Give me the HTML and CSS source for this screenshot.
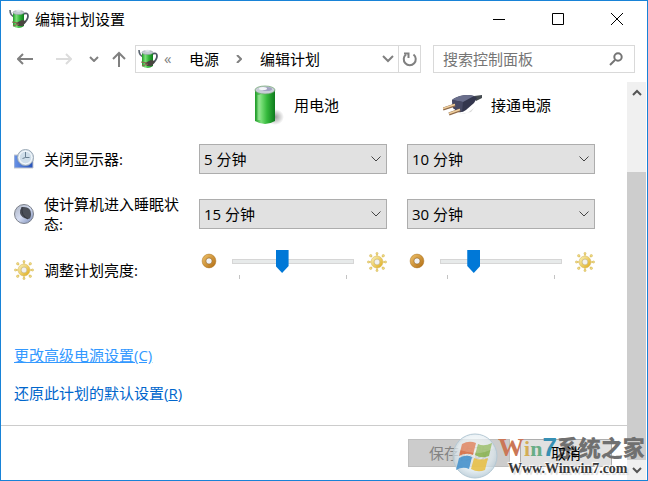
FILE: index.html
```html
<!DOCTYPE html>
<html lang="zh-CN">
  <head>
    <meta charset="UTF-8" />
    <meta name="viewport" content="width=device-width, initial-scale=1.0" />
    <title>编辑计划设置</title>
    <link rel="stylesheet" href="styles.css">
  </head>
  <body>
    <svg class="defs" width="0" height="0" aria-hidden="true">
      <defs>
        <linearGradient id="green" x1="0" x2="1">
          <stop offset="0" stop-color="#1f9a28" />
          <stop offset="0.3" stop-color="#7be07a" />
          <stop offset="0.6" stop-color="#35b93c" />
          <stop offset="1" stop-color="#0d7a1c" />
        </linearGradient>
        <linearGradient id="gold" x1="0" y1="0" x2="1" y2="1">
          <stop offset="0" stop-color="#e8b860" />
          <stop offset="1" stop-color="#b8761c" />
        </linearGradient>
        <linearGradient id="yellow" x1="0" y1="0" x2="1" y2="1">
          <stop offset="0" stop-color="#f7eba8" />
          <stop offset="1" stop-color="#e2b32a" />
        </linearGradient>
        <linearGradient id="blue" x1="0" x2="1">
          <stop offset="0" stop-color="#6a94e8" />
          <stop offset="1" stop-color="#2450b8" />
        </linearGradient>
        <linearGradient id="steel" x1="0" y1="0" x2="1" y2="1">
          <stop offset="0" stop-color="#a9b0bf" />
          <stop offset="0.5" stop-color="#d5ddf2" />
          <stop offset="1" stop-color="#7486b4" />
        </linearGradient>
        <radialGradient id="shadow">
          <stop offset="0" stop-color="#000" stop-opacity="0.4" />
          <stop offset="1" stop-color="#000" stop-opacity="0" />
        </radialGradient>
        <radialGradient id="glass" cx="0.5" cy="0.4" r="0.6">
          <stop offset="0" stop-color="#fff" stop-opacity="0.6" />
          <stop offset="0.7" stop-color="#dce8ee" stop-opacity="0.7" />
          <stop offset="1" stop-color="#b4c8d4" stop-opacity="0.8" />
        </radialGradient>
      </defs>
      <symbol id="power" viewBox="0 0 20 20">
        <path d="M1 1q0 6 5 7" fill="none" stroke="#5b6570" stroke-width="1.6" />
        <path d="M14 5q5-2 5 2t-5 8" fill="none" stroke="#4d5763" stroke-width="1.8" />
        <path d="M4 4v13q5.500 4 11 0V4z" fill="url(#green)" />
        <ellipse cx="9.500" cy="3.500" rx="5.500" ry="2" fill="#c3ccd2" stroke="#8d999f" stroke-width="0.6" />
        <ellipse cx="9.500" cy="1.800" rx="2.500" ry="1" fill="#dfe5ea" />
        <path d="M7 14l6-3 4 1-3 5-5 0z" fill="#4a4540" />
        <path d="M3 13l6 1M4 17l6-2" stroke="#8c6a4e" stroke-width="1.2" />
      </symbol>
      <symbol id="sun" viewBox="0 0 20 20">
        <path d="M10 2v2M10 16v2M2 10h2M16 10h2M4 4l1 1M15 15l1 1M4 16l1-1M15 5l1-1" stroke="#ecd273" stroke-width="1.4" />
        <g fill="#f0dc80" stroke="#cfae52" stroke-width="0.5">
          <circle cx="10" cy="1.500" r="1.100" /><circle cx="10" cy="18.500" r="1.100" />
          <circle cx="1.500" cy="10" r="1.100" /><circle cx="18.500" cy="10" r="1.100" />
          <circle cx="3.700" cy="3.700" r="1.200" /><circle cx="16.300" cy="3.700" r="1.200" />
          <circle cx="3.700" cy="16.300" r="1.200" /><circle cx="16.300" cy="16.300" r="1.200" />
        </g>
        <circle cx="10" cy="10" r="4.400" fill="#f1f1ef" stroke="url(#yellow)" stroke-width="3" />
        <circle cx="10" cy="10" r="6" fill="none" stroke="#cfab4c" stroke-width="0.5" />
        <circle cx="10" cy="10" r="2.900" fill="none" stroke="#b9a368" stroke-width="0.5" />
      </symbol>
      <symbol id="dim" viewBox="0 0 16 16">
        <circle cx="8" cy="8" r="5" fill="#f1f2f5" stroke="url(#gold)" stroke-width="3.800" />
        <circle cx="8" cy="8" r="6.900" fill="none" stroke="#a8701e" stroke-width="0.5" />
        <circle cx="8" cy="8" r="3.100" fill="none" stroke="#8e5f1c" stroke-width="0.6" />
      </symbol>
    </svg>

    <div class="window">
      <header class="title-bar">
        <svg class="app-icon" width="20" height="20"><use href="#power" /></svg>
        <h1>编辑计划设置</h1>
        <div class="window-buttons">
          <button aria-label="最小化"><svg width="12" height="12"><path d="M0 6.500h12" /></svg></button>
          <button aria-label="最大化"><svg width="12" height="12"><path d="M.5.500h11v11H.5z" /></svg></button>
          <button aria-label="关闭"><svg width="12" height="12"><path d="M0 0l12 12M12 0L0 12" /></svg></button>
        </div>
      </header>

      <nav class="nav-bar">
        <button class="arrow" aria-label="后退"><svg width="16" height="12"><path d="M1 6h15M6 1L1 6l5 5" /></svg></button>
        <button class="arrow disabled" aria-label="前进" disabled><svg width="16" height="12"><path d="M0 6h15M10 1l5 5-5 5" /></svg></button>
        <button class="recent" aria-label="最近"><svg width="10" height="6"><path d="M1 1l4 4 4-4" /></svg></button>
        <button class="up" aria-label="上移"><svg width="14" height="16"><path d="M7 16V2M1 8l6-6 6 6" /></svg></button>
        <div class="address">
          <svg class="app-icon" width="20" height="20"><use href="#power" /></svg>
          <span class="more">«</span>
          <a href="#">电源</a>
          <svg class="crumb" width="6" height="8"><path d="M1 0l4 4-4 4" /></svg>
          <a href="#">编辑计划</a>
          <button class="history" aria-label="历史"><svg width="12" height="8"><path d="M1 1l5 5 5-5" /></svg></button>
          <button class="refresh" aria-label="刷新">
            <svg width="16" height="16"><path d="M11.500 3.500a6 6 0 1 1-7.500 0" /><path d="M2 2.500h4.500V7" /></svg>
          </button>
        </div>
        <div class="search">
          <input type="search" aria-label="搜索控制面板" placeholder="搜索控制面板" />
          <svg width="14" height="14"><circle cx="9" cy="5" r="3.700" /><path d="M6 8l-5 5" /></svg>
        </div>
      </nav>

      <div class="body">
        <main>
          <div class="row heads">
            <span></span>
            <div class="head battery">
              <svg width="30" height="40">
                <ellipse cx="21" cy="32" rx="9" ry="8" fill="url(#shadow)" />
                <path d="M1 5v31q10 6 20 0V5z" fill="url(#green)" />
                <ellipse cx="11" cy="5" rx="10" ry="4" fill="#c9ced8" stroke="#6aa46c" stroke-width="0.7" />
                <ellipse cx="13" cy="4" rx="5" ry="2" fill="#a3a3c2" />
                <ellipse cx="9" cy="3.500" rx="4" ry="1.600" fill="#f4f6fa" />
                <path d="M5 10v25" stroke="#b8f5b4" stroke-opacity="0.5" stroke-width="3" />
              </svg>
              <span>用电池</span>
            </div>
            <div class="head plug">
              <svg width="40" height="22">
                <path d="M16 20q12 0 18-10l-6 8z" fill="#000" fill-opacity="0.15" />
                <path d="M31 2l8-1v3l-6 3z" fill="#454b50" />
                <path d="M9 6q2-2 8-4 8-2 14 0l3 2-3 5-8 7q-4 3-8 2l-5-4z" fill="#33364d" />
                <path d="M9 6q2-2 8-4 8-2 14 0L20 8z" fill="#6a6f8c" />
                <path d="M9 6l11 2-1 10-9-4z" fill="#464963" />
                <path d="M0 15l12-4M6 20l11-4" stroke="#8f6a49" stroke-width="3" />
                <path d="M0 14.500l12-4M6 19.500l11-4" stroke="#efcf9e" stroke-width="1.600" />
              </svg>
              <span>接通电源</span>
            </div>
          </div>

          <div class="row display">
            <label class="name" for="display-battery">
              <svg width="20" height="20">
                <path d="M0 6h19v13H0z" fill="url(#blue)" stroke="#c3c7ce" />
                <circle cx="11.500" cy="8.500" r="8" fill="#dce6ef" stroke="#9aa9b6" />
                <circle cx="11.500" cy="8.500" r="6.300" fill="#cfdeea" stroke="#f6fafd" />
                <path d="M11.500 3v5.500h4M11.500 8.500l-3 1" fill="none" stroke="#6a8093" />
              </svg>
              <span>关闭显示器:</span>
            </label>
            <select id="display-battery"><option>5 分钟</option><option>10 分钟</option></select>
            <select aria-label="关闭显示器 接通电源"><option>10 分钟</option><option>15 分钟</option></select>
          </div>

          <div class="row sleep">
            <label class="name" for="sleep-battery">
              <svg width="20" height="20">
                <circle cx="10" cy="10" r="9.500" fill="url(#steel)" stroke="#7d828c" />
                <path d="M8 3q9-1 9 7 0 5-3 5-7-1-8-6 0-4 2-6z" fill="#4b4f58" />
                <path d="M8 3q-1 9 6 12" fill="none" stroke="#343740" />
              </svg>
              <span>使计算机进入睡眠状态:</span>
            </label>
            <select id="sleep-battery"><option>15 分钟</option><option>30 分钟</option></select>
            <select aria-label="睡眠 接通电源"><option>30 分钟</option><option>60 分钟</option></select>
          </div>

          <div class="row brightness">
            <label class="name" for="bright-battery">
              <svg width="20" height="20"><use href="#sun" /></svg>
              <span>调整计划亮度:</span>
            </label>
            <div class="slider">
              <svg class="dim" width="16" height="16"><use href="#dim" /></svg>
              <div class="track">
                <input id="bright-battery" type="range" min="0" max="100" value="40" />
                <div class="ticks"></div>
              </div>
              <svg width="20" height="20"><use href="#sun" /></svg>
            </div>
            <div class="slider">
              <svg class="dim" width="16" height="16"><use href="#dim" /></svg>
              <div class="track">
                <input type="range" aria-label="亮度 接通电源" min="0" max="100" value="25" />
                <div class="ticks"></div>
              </div>
              <svg width="20" height="20"><use href="#sun" /></svg>
            </div>
          </div>

          <div class="links">
            <a class="hover" href="#">更改高级电源设置(C)</a>
            <a href="#">还原此计划的默认设置(<u>R</u>)</a>
          </div>

          <footer>
            <button class="save" disabled>保存修改</button>
            <button class="cancel"><span>取消</span></button>
          </footer>
        </main>

        <div class="scrollbar">
          <button aria-label="向上滚动"><svg width="10" height="7"><path d="M1 6l4-4 4 4" /></svg></button>
          <div class="thumb"></div>
          <button class="down" aria-label="向下滚动"><svg width="10" height="7"><path d="M1 1l4 4 4-4" /></svg></button>
        </div>
      </div>

      <div class="watermark">
        <svg width="46" height="48">
          <circle cx="23" cy="24" r="22" fill="url(#glass)" stroke="#b4c8d4" />
          <g fill-opacity="0.85">
            <path d="M10 12q7-4 14-1l-3 12q-7-3-14 1z" fill="#d9683c" />
            <path d="M26 12q6 3 14-1l-3 13q-8 3-14-1z" fill="#86b04a" />
            <path d="M7 26q7-4 13-1l-3 12q-6-3-13 1z" fill="#3f8ecb" />
            <path d="M22 26q7 3 14 0l-3 12q-7 3-14-1z" fill="#e8bd3e" />
          </g>
          <path d="M4 17Q10 4 23 3t19 13q-10 6-19 5T4 17z" fill="#fff" fill-opacity="0.2" />
        </svg>
        <div class="brand">
          <p class="logo"><span class="w">W</span><span class="i">i</span><span class="n">n</span><span class="seven">7</span><span class="cn">系统之家</span></p>
          <p class="url">Www.Winwin7.com</p>
        </div>
      </div>
    </div>
  </body>
</html>
```
FILE: styles.css
```css
* {
  box-sizing: border-box;
}
body {
  margin: 0;
  background: #fff;
  color: #000;
  font: 15px/20px "Open Sans", "Noto Sans CJK SC", sans-serif;
}
svg {
  display: block;
  flex: none;
}
.defs {
  position: absolute;
}
button,
input,
select {
  font: inherit;
  color: inherit;
}
button {
  display: flex;
  align-items: center;
  justify-content: center;
  padding: 0;
  border: 0;
  background: none;
}
button path,
.crumb path {
  fill: none;
  stroke: currentColor;
}
h1,
p {
  margin: 0;
}
.window {
  position: relative;
  display: flex;
  flex-direction: column;
  min-height: 100vh;
  border: 1px solid #1883d7;
}

/* title bar */
.title-bar {
  display: flex;
  align-items: center;
  height: 36px;
  padding: 0 1px 0 8px;
}
h1 {
  flex: 1;
  margin-left: 6px;
  font-size: 15px;
  font-weight: normal;
}
.window-buttons {
  display: flex;
}
.window-buttons button {
  width: 59px;
  height: 36px;
}

/* navigation */
.nav-bar {
  display: flex;
  align-items: center;
  height: 45px;
  padding: 0 12px 1px 16px;
  color: #808080;
}
.nav-bar button path {
  stroke-width: 2;
}
.arrow {
  margin-right: 23px;
}
.arrow.disabled {
  margin-right: 17px;
  color: #dcdcdc;
}
.recent {
  margin-right: 13px;
}
.up {
  margin-right: 9px;
}
.address,
.search {
  display: flex;
  align-items: center;
  height: 28px;
  border: 1px solid #d9d9d9;
}
.address {
  flex: 1;
  padding-left: 2px;
}
.address a {
  color: #000;
  text-decoration: none;
}
.more {
  width: 25px;
  margin-left: 6px;
  padding-bottom: 2px;
}
.crumb {
  margin: 0 18px 0 17px;
  stroke-width: 2;
}
.history {
  margin-left: auto;
  width: 20px;
  height: 26px;
}
.refresh {
  width: 22px;
  height: 26px;
  border-left: 1px solid #d9d9d9;
}
.search {
  width: 202px;
  margin-left: 12px;
  padding: 0 11px 0 9px;
}
.search input {
  flex: 1;
  min-width: 0;
  padding: 0;
  border: 0;
  outline: 0;
  background: none;
}
.search input::placeholder {
  color: #757575;
}
.search svg {
  fill: none;
  stroke: #747474;
  stroke-width: 2;
}

/* content and its scrollbar */
.body {
  flex: 1;
  display: flex;
  padding-right: 1px;
}
main {
  flex: 1;
  display: flex;
  flex-direction: column;
}
.row {
  display: grid;
  grid-template-columns: 165px 1fr 1fr;
  column-gap: 20px;
  align-items: center;
  padding: 0 32px 0 13px;
}
.heads {
  height: 46px;
}
.display {
  height: 62px;
}
.sleep {
  height: 48px;
}
.brightness {
  height: 64px;
}
.head {
  display: flex;
  align-items: center;
  gap: 10px;
}
.battery {
  padding-left: 55px;
}
.plug {
  padding-left: 36px;
  gap: 8px;
}
.name {
  display: flex;
  align-items: center;
  gap: 10px;
}
select {
  width: 100%;
  height: 30px;
  padding: 0 24px 0 4px;
  border: 1px solid #adadad;
  border-radius: 0;
  appearance: none;
  background: #e1e1e1 url("data:image/svg+xml,%3Csvg xmlns='http://www.w3.org/2000/svg' width='10' height='6'%3E%3Cpath d='M.5.5L5 5 9.500.5' fill='none' stroke='%23444'/%3E%3C/svg%3E") no-repeat right 5px center;
}
.slider {
  display: flex;
  align-self: start;
  padding: 12px 0 0 2px;
}
.slider svg {
  margin-top: 2px;
}
.slider .dim {
  margin-top: 3px;
}
.track {
  flex: 1;
  margin: 0 13px 0 15px;
}
input[type="range"] {
  display: block;
  width: 100%;
  height: 23px;
  margin: 0;
  appearance: none;
  background: linear-gradient(#e7eaea, #e7eaea) center / calc(100% - 2px) 3px no-repeat,
    linear-gradient(#d6d6d6, #d6d6d6) center / 100% 5px no-repeat;
}
input[type="range"]::-webkit-slider-thumb {
  appearance: none;
  width: 13px;
  height: 23px;
  background: #0078d7;
  clip-path: polygon(0 0, 100% 0, 100% 70%, 50% 100%, 0 70%);
}
.ticks {
  height: 4px;
  margin: 2px 7px 0;
  border: solid #c4c4c4;
  border-width: 0 1px;
}
.links {
  display: flex;
  flex-direction: column;
  align-items: flex-start;
  gap: 18px;
  padding: 43px 13px 22px;
}
.links a {
  color: #0066cc;
  text-decoration: none;
}
.links .hover {
  color: #3399ff;
  text-decoration: underline;
}
footer {
  flex: 1;
  display: flex;
  gap: 10px;
  justify-content: flex-end;
  align-items: flex-start;
  padding: 13px 15px 13px 0;
  border-top: 1px solid #ccc;
}
footer button {
  height: 28px;
  border: 1px solid #adadad;
}
.save {
  width: 102px;
  background: #ccc;
  border-color: #bfbfbf;
  color: #838383;
}
.cancel {
  width: 92px;
  background: #e1e1e1;
}
.cancel span {
  position: relative;
  z-index: 2;
}
.scrollbar {
  display: flex;
  flex-direction: column;
  width: 19px;
  background: #f0f0f0;
}
.scrollbar button {
  height: 20px;
  color: #555;
  stroke-width: 2;
}
.thumb {
  flex: 1;
  margin-top: 70px;
  background: #cdcdcd;
}
.scrollbar .down {
  position: relative;
  z-index: 2;
}

/* site mark over the bottom right corner */
.watermark {
  position: absolute;
  right: 1px;
  bottom: 0;
  z-index: 1;
  display: flex;
  width: 194px;
  pointer-events: none;
}
.brand {
  white-space: nowrap;
}
.logo {
  display: flex;
  align-items: baseline;
  height: 28px;
  font: bold 22px/28px "Liberation Serif", serif;
}
.w {
  font-size: 26px;
  color: #cb7757;
}
.i {
  color: #d3ad55;
}
.n {
  color: #68ad86;
}
.seven {
  font: bold 26px/28px "Liberation Sans", sans-serif;
  color: #3790b4;
}
.cn {
  font: 900 22px/28px "Noto Sans CJK SC", sans-serif;
  color: #707070;
}
.url {
  padding-left: 10px;
  font: bold 14px/18px "Liberation Serif", serif;
  color: #383838;
  text-shadow: 0 0 2px #fff, -1px -1px 1px #fff, 2px 2px 1px #ddd;
}
```
